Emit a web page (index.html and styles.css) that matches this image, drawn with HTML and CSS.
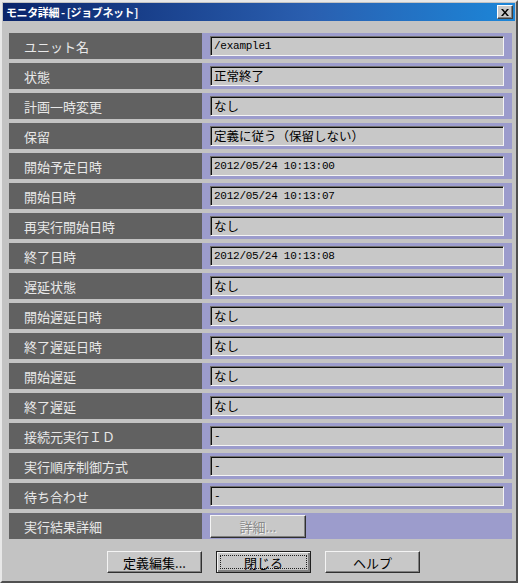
FILE: index.html
```html
<!DOCTYPE html>
<html lang="ja">
<head>
<meta charset="utf-8">
<title>モニタ詳細</title>
<link rel="stylesheet" href="styles.css">
</head>
<body>
<div class="window">
  <div class="titlebar">
    <span class="title">モニタ詳細 - [ジョブネット]</span>
    <span class="close"><svg width="8" height="7" viewBox="0 0 8 7"><path d="M0 0h2l2 2.5L6 0h2L5 3.5 8 7H6L4 4.5 2 7H0l3-3.5z" fill="#000"/></svg></span>
  </div>
  <div class="content">
    <div class="grid">
      <div class="label">ユニット名</div><div class="cell"><div class="field mono">/example1</div></div>
      <div class="label">状態</div><div class="cell"><div class="field">正常終了</div></div>
      <div class="label">計画一時変更</div><div class="cell"><div class="field">なし</div></div>
      <div class="label">保留</div><div class="cell"><div class="field">定義に従う（保留しない）</div></div>
      <div class="label">開始予定日時</div><div class="cell"><div class="field mono">2012/05/24 10:13:00</div></div>
      <div class="label">開始日時</div><div class="cell"><div class="field mono">2012/05/24 10:13:07</div></div>
      <div class="label">再実行開始日時</div><div class="cell"><div class="field">なし</div></div>
      <div class="label">終了日時</div><div class="cell"><div class="field mono">2012/05/24 10:13:08</div></div>
      <div class="label">遅延状態</div><div class="cell"><div class="field">なし</div></div>
      <div class="label">開始遅延日時</div><div class="cell"><div class="field">なし</div></div>
      <div class="label">終了遅延日時</div><div class="cell"><div class="field">なし</div></div>
      <div class="label">開始遅延</div><div class="cell"><div class="field">なし</div></div>
      <div class="label">終了遅延</div><div class="cell"><div class="field">なし</div></div>
      <div class="label">接続元実行ＩＤ</div><div class="cell"><div class="field mono">-</div></div>
      <div class="label">実行順序制御方式</div><div class="cell"><div class="field mono">-</div></div>
      <div class="label">待ち合わせ</div><div class="cell"><div class="field mono">-</div></div>
      <div class="label">実行結果詳細</div><div class="cell cell-btn"><span class="btn small disabled">詳細...</span></div>
    </div>
    <div class="buttons">
      <span class="btn">定義編集...</span>
      <span class="btn default"><span class="focus">閉じる</span></span>
      <span class="btn">ヘルプ</span>
    </div>
  </div>
</div>
</body>
</html>
```

FILE: styles.css
```css
html, body {
  margin: 0;
  padding: 0;
  background: #ffffff;
}

body {
  font-family: "Noto Sans CJK JP", "Liberation Sans", sans-serif;
  width: 524px;
  height: 587px;
  overflow: hidden;
}

.window {
  box-sizing: border-box;
  width: 518px;
  height: 583px;
  background: #c3c3c3;
  border-style: solid;
  border-width: 2px;
  border-color: #e8e8e8 #505050 #505050 #e8e8e8;
  padding: 1px;
  display: flex;
  flex-direction: column;
}

.titlebar {
  height: 18px;
  background: linear-gradient(to right, #0a246a 0%, #2a5fb0 60%, #1c86d8 100%);
  display: flex;
  align-items: center;
  justify-content: space-between;
  padding: 0 2px 0 3px;
}

.title {
  color: #ffffff;
  font-size: 11px;
  font-weight: bold;
  line-height: 18px;
  letter-spacing: -0.4px;
}

.close {
  box-sizing: border-box;
  width: 16px;
  height: 14px;
  background: #c8c8c8;
  border-style: solid;
  border-width: 1px;
  border-color: #ffffff #404040 #404040 #ffffff;
  box-shadow: inset -1px -1px #808080;
  display: flex;
  align-items: center;
  justify-content: center;
}

.content {
  padding: 12px 3px 0 6px;
  display: flex;
  flex-direction: column;
}

.grid {
  display: grid;
  grid-template-columns: 193px 310px;
  grid-auto-rows: 26px;
  row-gap: 4px;
}

.label {
  background: #616161;
  color: #e8e8e8;
  font-size: 13px;
  padding-left: 15px;
  display: flex;
  align-items: center;
  white-space: nowrap;
}

.cell {
  background: #9c9ccc;
  padding: 3px 8px 3px 8px;
  box-sizing: border-box;
}

.cell-btn {
  padding: 2px 8px 1px 8px;
}

.field {
  box-sizing: border-box;
  height: 20px;
  background: #c8c8c8;
  border-style: solid;
  border-width: 1px;
  border-color: #707070 #f4f4f4 #f4f4f4 #707070;
  box-shadow: inset 1px 1px #101010;
  padding: 0 0 0 3px;
  font-size: 12.5px;
  line-height: 18px;
  color: #000000;
  white-space: nowrap;
}

.field.mono {
  font-family: "Liberation Mono", "Noto Sans CJK JP", monospace;
  font-size: 11px;
  letter-spacing: -0.25px;
}

.buttons {
  display: flex;
  gap: 14px;
  padding-left: 98px;
  margin-top: 12px;
}

.btn {
  box-sizing: border-box;
  width: 95px;
  height: 22px;
  background: #c8c8c8;
  border-style: solid;
  border-width: 1px;
  border-color: #f4f4f4 #303030 #303030 #f4f4f4;
  box-shadow: inset -1px -1px #808080;
  display: flex;
  align-items: center;
  justify-content: center;
  font-size: 13px;
  color: #000;
}

.btn.small {
  width: 96px;
  height: 23px;
}

.btn.disabled {
  color: #8a8a8a;
  text-shadow: 1px 1px #f0f0f0;
}

.btn.default {
  border-color: #202020;
  box-shadow: inset 1px 1px #f4f4f4, inset -2px -2px #808080;
  padding: 3px;
}

.focus {
  box-sizing: border-box;
  width: 100%;
  height: 100%;
  border: 1px dotted #202020;
  display: flex;
  align-items: center;
  justify-content: center;
}
```
